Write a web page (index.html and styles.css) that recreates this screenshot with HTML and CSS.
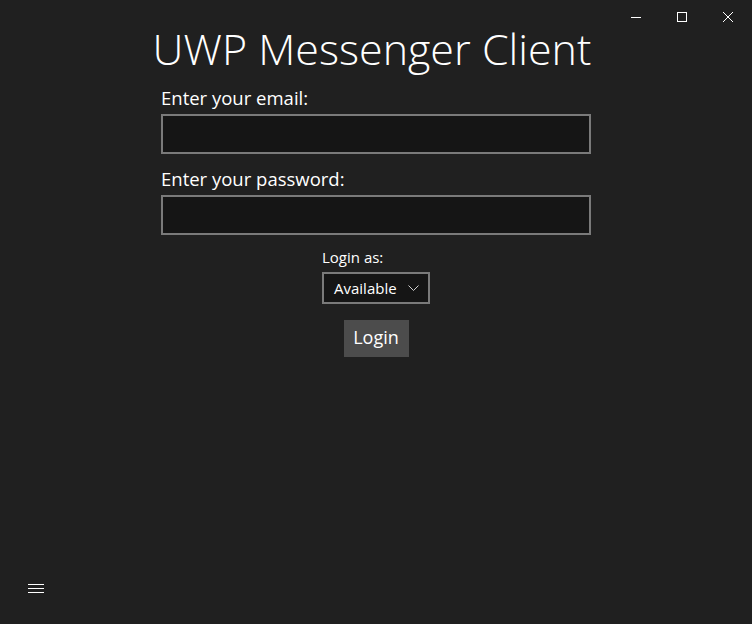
FILE: index.html
```html
<!DOCTYPE html>
<html lang="en">
<head>
<meta charset="utf-8">
<title>UWP Messenger Client</title>
<link rel="stylesheet" href="styles.css">
</head>
<body>
<div class="app">
  <div class="caption">
    <button class="cap-btn" aria-label="Minimize">
      <svg width="10" height="10" viewBox="0 0 10 10"><path d="M0 5.5H10" stroke="#fff" stroke-width="1"/></svg>
    </button>
    <button class="cap-btn" aria-label="Maximize">
      <svg width="10" height="10" viewBox="0 0 10 10"><rect x="0.5" y="0.5" width="9" height="9" fill="none" stroke="#fff" stroke-width="1"/></svg>
    </button>
    <button class="cap-btn" aria-label="Close">
      <svg width="10" height="10" viewBox="0 0 10 10"><path d="M0 0L10 10M10 0L0 10" stroke="#fff" stroke-width="1"/></svg>
    </button>
  </div>

  <main class="login">
    <h1 class="title">UWP Messenger Client</h1>
    <div class="field">
      <label class="field-label" for="email">Enter your email:</label>
      <input class="textbox" id="email" type="text">
    </div>
    <div class="field">
      <label class="field-label" for="pw">Enter your password:</label>
      <input class="textbox" id="pw" type="password">
    </div>
    <div class="status">
      <span class="status-label">Login as:</span>
      <div class="combo">
        <span>Available</span>
        <svg class="chev" width="11" height="6" viewBox="0 0 11 6"><path d="M0.5 0.5L5.5 5.5L10.5 0.5" fill="none" stroke="#cfcfcf" stroke-width="1"/></svg>
      </div>
    </div>
    <button class="btn">Login</button>
  </main>

  <footer class="footer">
    <button class="hamburger" aria-label="Menu">
      <svg width="16" height="9" viewBox="0 0 16 9"><path d="M0 0.5H16M0 4.5H16M0 8.5H16" stroke="#fff" stroke-width="1"/></svg>
    </button>
  </footer>
</div>
</body>
</html>
```

FILE: styles.css
```css
* { box-sizing: border-box; }

html, body {
  margin: 0;
  padding: 0;
  background: #202020;
}

body {
  font-family: "Open Sans", "Noto Sans", sans-serif;
  color: #ffffff;
}

.app {
  position: relative;
  height: 624px;
  display: flex;
  flex-direction: column;
  background: #202020;
}

.caption {
  position: absolute;
  top: 0;
  right: 1px;
  display: flex;
}

.cap-btn {
  width: 46px;
  height: 33px;
  padding: 0;
  border: 0;
  background: transparent;
  display: flex;
  align-items: center;
  justify-content: center;
}

.cap-btn svg { display: block; }

.login {
  flex: 1;
  width: 430px;
  margin: 0 auto;
  padding-top: 23px;
  display: flex;
  flex-direction: column;
  align-items: stretch;
}

.title {
  margin: 0 -10px 0 -18px;
  font-weight: 300;
  font-size: 43px;
  line-height: 51px;
  text-align: center;
  white-space: nowrap;
}

.field {
  margin-top: 11px;
  display: flex;
  flex-direction: column;
}

.field-label {
  font-size: 18.5px;
  line-height: 25px;
}

.textbox {
  margin-top: 4px;
  height: 40px;
  background: #151515;
  border: 2px solid #7a7a7a;
  outline: none;
  color: #fff;
  font: inherit;
  padding: 0 10px;
}

.field + .field {
  margin-top: 12px;
}

.status {
  margin-top: 12px;
  align-self: center;
  display: flex;
  flex-direction: column;
}

.status-label {
  font-size: 15px;
  line-height: 20px;
}

.combo {
  margin-top: 5px;
  width: 108px;
  height: 32px;
  border: 2px solid #7a7a7a;
  background: #151515;
  display: flex;
  align-items: center;
  padding: 0 9px 0 10px;
  font-size: 15px;
  line-height: 28px;
}

.chev {
  margin-left: auto;
  display: block;
}

.btn {
  margin-top: 16px;
  align-self: center;
  height: 37px;
  width: 65px;
  padding: 0 0 2px;
  border: 0;
  background: #4c4c4c;
  color: #fff;
  font-family: inherit;
  font-size: 18px;
  line-height: 35px;
}

.footer {
  height: 60px;
  padding-left: 12px;
}

.hamburger {
  width: 48px;
  height: 48px;
  padding: 0;
  border: 0;
  background: transparent;
  display: flex;
  align-items: center;
  justify-content: center;
}

.hamburger svg { display: block; }
```
